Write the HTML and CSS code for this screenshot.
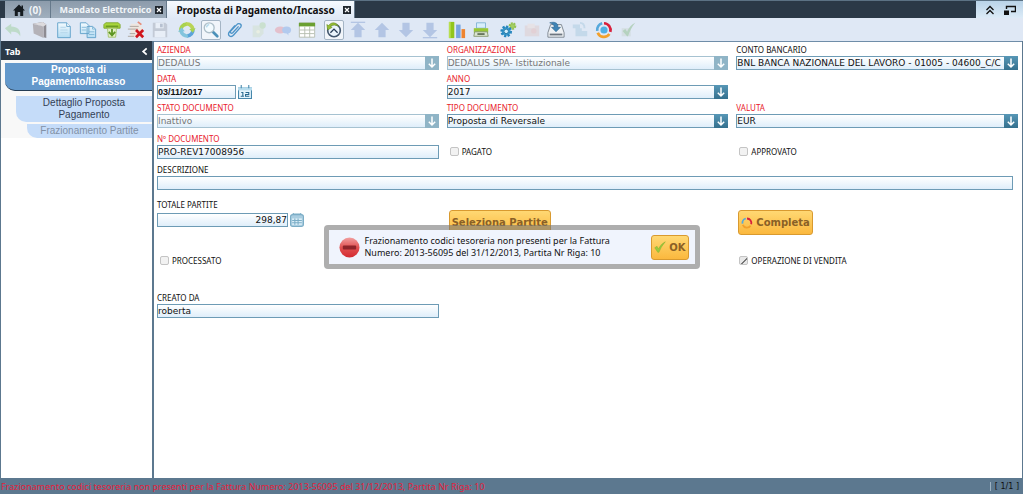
FILE: index.html
```html
<!DOCTYPE html>
<html lang="it">
<head>
<meta charset="utf-8">
<title>Proposta di Pagamento/Incasso</title>
<link rel="stylesheet" href="styles.css">
</head>
<body>
<svg class="defs" aria-hidden="true">
  <defs>
    <linearGradient id="page" x1="0" y1="0" x2="0" y2="1"><stop offset="0" stop-color="#f4fbff"/><stop offset="1" stop-color="#b4dcf2"/></linearGradient>
    <linearGradient id="ball" x1="0" y1="0" x2="0" y2="1"><stop offset="0" stop-color="#f2a0a0"/><stop offset=".5" stop-color="#e05050"/><stop offset="1" stop-color="#d42a30"/></linearGradient>
    <symbol id="arrow" viewBox="0 0 14 14"><path d="M7 2.500v8.500M3.800 7.800 7 11l3.200-3.200" fill="none" stroke="#fff" stroke-width="1.500"/></symbol>
    <symbol id="up" viewBox="0 0 20 20"><path d="M10 2 18 10h-4v8H6v-8H2z" fill="#b3c5e4"/></symbol>
    <symbol id="ring" viewBox="0 0 20 20"><g fill="none" stroke-width="3"><path d="M10 2.500A7.500 7.500 0 0 1 17 12" stroke="#d8203c"/><path d="M16 14.500A7.500 7.500 0 0 1 3 13" stroke="#f2a12c"/><path d="M2.500 11A7.500 7.500 0 0 1 8 2.500" stroke="#56a9dc"/></g></symbol>
    <symbol id="tick" viewBox="0 0 16 16"><path d="M1 9l3-2 2 3.500Q9 4 15 1 9 8 6.500 15H5z" fill="#9cc93c" stroke="#7fae2c" stroke-width=".6"/></symbol>
  </defs>
</svg>

<header class="tabbar">
  <nav class="tabs">
    <div class="tab home"><button type="button"><svg viewBox="0 0 12 12"><path d="M6 .5 0 6.500h1.800V12h3V8h2.400v4h3V6.500H12L10 4.500V1.500H8.500V3z" fill="#151b20"/></svg>(0)</button></div>
    <div class="tab"><button type="button">Mandato Elettronico</button><button type="button" class="close" aria-label="Chiudi"><svg viewBox="0 0 8 8"><path d="M2 2l4 4M6 2 2 6" stroke="#fff" stroke-width="1.200"/></svg></button></div>
    <div class="tab active"><button type="button">Proposta di Pagamento/Incasso</button><button type="button" class="close" aria-label="Chiudi"><svg viewBox="0 0 8 8"><path d="M2 2l4 4M6 2 2 6" stroke="#fff" stroke-width="1.200"/></svg></button></div>
  </nav>
  <div class="window-tools">
    <button type="button" aria-label="Comprimi"><svg viewBox="0 0 10 10"><path d="M1.500 5 5 1.500 8.500 5M1.500 9 5 5.500 8.500 9" fill="none" stroke="#111" stroke-width="1.300"/></svg></button>
    <button type="button" aria-label="Finestra"><svg class="wide" viewBox="0 0 12 10"><path d="M2.500 4V1.500h9v5H7" fill="none" stroke="#111" stroke-width="1.400"/><path d="M0 5.500h5V10H0z" fill="#111"/></svg></button>
  </div>
</header>

<div class="toolbar" role="toolbar">
  <button type="button" class="off" aria-label="Annulla"><svg viewBox="0 0 20 20"><path d="M1 8 8 3v3c7 0 11 4 10 11-2-4-5-5.500-10-5v3z" fill="#9fd09f"/></svg></button>
  <button type="button" class="sep" aria-label="Aiuto"><svg viewBox="0 0 20 20"><path d="M2 3 13 1l4 3v15l-3-1V6z" fill="#8d8b92"/><path d="M2 3l12 3v13L3 14z" fill="#b4b2b8"/><path d="M2 3 13 1l4 3-3 2z" fill="#dddbde"/></svg></button>
  <button type="button" aria-label="Nuovo"><svg viewBox="0 0 20 20"><path d="M3 2h10l4 4v12.500H3z" fill="url(#page)" stroke="#5d9fc8"/><path d="M13 2v4h4" fill="#fff" stroke="#5d9fc8"/><path d="M6 7h6M6 10h8M6 13h8" stroke="#b3d5ea"/></svg></button>
  <button type="button" aria-label="Copia"><svg viewBox="0 0 20 20"><path d="M1.500 2H8l3 3v9H1.500zM9 6h6l3.500 3v9.500H9z" fill="url(#page)" stroke="#5d9fc8"/><path d="M15 6v3h3.500M3 7h5M3 10h5M11 12h6M11 15h6" fill="none" stroke="#82b8d8"/></svg></button>
  <button type="button" aria-label="Elimina"><svg viewBox="0 0 20 20"><path d="M3 2h14l2 2v4H1V4z" fill="#a9d63c" stroke="#7ea72d"/><path d="M3 5h14v2H3z" fill="#6d9c22"/><path d="M5 8h10l-1 10H6z" fill="#e3f0c5" stroke="#a3c26a"/><path d="M10 9v6M6.500 12l3.500 4 3.500-4" fill="none" stroke="#5d9623" stroke-width="2"/></svg></button>
  <button type="button" aria-label="Elimina selezione"><svg viewBox="0 0 20 20"><path d="M4 3h9l4 4v11H4z" fill="#efe6df"/><path d="M3 6h10M1 9h11M3 14h6M1 17h7" stroke="#aaa39b"/><path d="m12 1 4 3" stroke="#e68d79" stroke-width="2"/><path d="m10 10 8 8M18 10l-8 8" stroke="#cf151d" stroke-width="3"/></svg></button>
  <button type="button" class="off" aria-label="Salva"><svg viewBox="0 0 20 20"><path d="M2 2h14l2 2v14H2z" fill="#a9aeb9"/><path d="M5 2h9v6H5zM4 11h12v7H4z" fill="#f1f4f9"/><path d="M10 3h3v4h-3z" fill="#909cae"/></svg></button>
  <button type="button" class="sep" aria-label="Aggiorna"><svg viewBox="0 0 20 20"><g fill="none" stroke-width="4"><path d="M3.500 12A6.500 6.500 0 0 1 10 3.500" stroke="#a9d34e"/><path d="M9 3.500A6.500 6.500 0 0 1 16.500 9" stroke="#b9d455"/><path d="M16.500 9A6.500 6.500 0 0 1 10 16.500" stroke="#5ca4da"/><path d="M11 16.500A6.500 6.500 0 0 1 3.500 11" stroke="#83c4dd"/></g><path d="m12.500 9 4 4 3-5z" fill="#a9d34e"/><path d="m0 12 4-5 3.500 4.500z" fill="#83c4dd"/></svg></button>
  <button type="button" class="pressed" aria-label="Cerca"><svg viewBox="0 0 20 20"><path d="m12 12 5 5" stroke="#4c91b9" stroke-width="3" stroke-linecap="round"/><circle cx="8" cy="7.500" r="5.500" fill="#f3fbff" stroke="#aebfc9" stroke-width="1.500"/><path d="M5 7a3.500 3.500 0 0 1 3-3" fill="none" stroke="#b3d8eb" stroke-width="1.500"/></svg></button>
  <button type="button" aria-label="Allegato"><svg viewBox="0 0 20 20"><path d="m14 6-6.500 7c-1.500 1.500-3.500 0-2.500-1.700L12 4c2-2.300 6-.5 4.500 2.500L8.500 15.500c-3 3.500-7.500.5-5-3L10 5" fill="none" stroke="#4d94c8" stroke-width="1.500"/></svg></button>
  <button type="button" class="off" aria-label="Nota"><svg viewBox="0 0 20 20"><path d="M3 5h12v9l-4 4H3z" fill="#d3e2cd"/><circle cx="14" cy="5" r="3.500" fill="#b6d9aa"/><circle cx="9" cy="12" r="2" fill="#f3f5d0"/></svg></button>
  <button type="button" class="off" aria-label="Richiesta"><svg viewBox="0 0 20 20"><ellipse cx="7" cy="10" rx="6" ry="4" fill="#e99aa4"/><ellipse cx="14" cy="10" rx="5" ry="4" fill="#87aee8"/><path d="m13 12 3 4v-4z" fill="#87aee8"/></svg></button>
  <button type="button" aria-label="Griglia"><svg viewBox="0 0 20 20"><path d="M1.500 2h17v16h-17z" fill="#fff" stroke="#b4bcae"/><path d="M1 2h18v4H1z" fill="#6ba032"/><path d="M2 10h16M2 14h16M7.500 6v12M13 6v12" stroke="#b4bcae"/></svg></button>
  <button type="button" class="pressed sep" aria-label="Storico"><svg viewBox="0 0 20 20"><circle cx="10" cy="10.500" r="7" fill="#eaf4fc" stroke="#42566e" stroke-width="1.800"/><path d="m6 13 4-4 4 4" fill="none" stroke="#2a3f58" stroke-width="1.500"/><path d="M2 4l1 6 5-3-2-1c3-2 6-2 9 0-2-4-7-6-11-1z" fill="#97bd35" stroke="#658d20" stroke-width=".6"/></svg></button>
  <button type="button" aria-label="Primo"><svg viewBox="0 0 20 20"><use href="#up"/><path d="M2 1.500h16" stroke="#b3c5e4" stroke-width="1.500"/></svg></button>
  <button type="button" aria-label="Precedente"><svg viewBox="0 0 20 20"><use href="#up"/></svg></button>
  <button type="button" aria-label="Successivo"><svg viewBox="0 0 20 20"><use href="#up" transform="rotate(180 10 10)"/></svg></button>
  <button type="button" aria-label="Ultimo"><svg viewBox="0 0 20 20"><use href="#up" transform="rotate(180 10 10)"/><path d="M2 18.500h16" stroke="#b3c5e4" stroke-width="1.500"/></svg></button>
  <button type="button" class="sep" aria-label="Report"><svg viewBox="0 0 20 20"><path d="M1 1h6v18H1z" fill="#92c51c"/><path d="M9 4h5v15H9z" fill="#79a5df"/><path d="M15 9h4v10h-4z" fill="#ee8430"/><path d="M1 1h2v18H1z" fill="#b8df4f"/></svg></button>
  <button type="button" aria-label="Stampa"><svg viewBox="0 0 20 20"><path d="M5 2h10v6H5z" fill="#d8eefb" stroke="#7fb3d4"/><path d="M2 8h16v5H2z" fill="#99c735"/><path d="M3 12h14l1 5H2z" fill="#dbe4d2" stroke="#84976c"/><path d="M6 14.500h8" stroke="#3b4a31" stroke-width="1.500"/></svg></button>
  <button type="button" class="sep" aria-label="Processo"><svg viewBox="0 0 20 20"><circle cx="15" cy="5.500" r="3" fill="#a4ce66" stroke="#94c24f" stroke-width="2.500" stroke-dasharray="2 1"/><circle cx="8" cy="11.500" r="5" fill="#3f9fd0" stroke="#2585bd" stroke-width="3" stroke-dasharray="2.300 1.500"/><circle cx="8" cy="11.500" r="2.500" fill="#d4effc" stroke="#1b6f9f"/></svg></button>
  <button type="button" class="off" aria-label="Archivio"><svg viewBox="0 0 20 20"><path d="M2 5h16v12H2z" fill="#dfccca"/><path d="M5 3h8v5H5z" fill="#eeded9"/><circle cx="12" cy="11" r="3" fill="#e5bab6"/></svg></button>
  <button type="button" aria-label="Esporta"><svg viewBox="0 0 20 20"><path d="M4 4h12l3 9v5H1v-5z" fill="#eef1f4" stroke="#78818b"/><path d="M3 14h14v2H3z" fill="#6c7680"/><path d="M3 2c6-2 10 1 9 5h3l-5 5-5-5h3c0-3-2-4-5-5z" fill="#3f84b5" stroke="#285e88" stroke-width=".6"/></svg></button>
  <button type="button" class="off" aria-label="Flusso"><svg viewBox="0 0 20 20"><path d="M2 4h8v4H2zM5 8h7v9H5zM12 11h6v6h-6z" fill="#aacbe0"/><path d="M10 2c4 0 5 2 5 6" fill="none" stroke="#aacbe0" stroke-width="2"/></svg></button>
  <button type="button" aria-label="Prodotto"><svg viewBox="0 0 20 20"><use href="#ring"/><circle cx="10" cy="10" r="4" fill="#4fb0e5"/></svg></button>
  <button type="button" class="off" aria-label="Conferma"><svg viewBox="0 0 20 20"><path d="M3 8h10v9H3z" fill="#cbd6d2"/><path d="m4 11 3-2 2 3c2-5 5-8 9-10-4 5-6 9-8 15H9z" fill="#8cbd8a"/></svg></button>
</div>

<div class="workspace">
  <aside class="sidebar">
    <div class="side-head"><span>Tab</span><button type="button" aria-label="Chiudi pannello"><svg viewBox="0 0 8 10"><path d="M6.500 1.500 2.500 5l4 3.500" fill="none" stroke="#fff" stroke-width="2"/></svg></button></div>
    <nav class="side-nav">
      <a class="level1" href="#proposta">Proposta di Pagamento/Incasso</a>
      <a class="level2" href="#dettaglio">Dettaglio Proposta Pagamento</a>
      <a class="level3" href="#frazionamento">Frazionamento Partite</a>
    </nav>
  </aside>

  <main class="panel">
    <form class="form">
      <div class="field"><label class="required" for="azienda">AZIENDA</label><div class="combo disabled"><select id="azienda" disabled><option>DEDALUS</option></select><svg><use href="#arrow"/></svg></div></div>
      <div class="field"><label class="required" for="org">ORGANIZZAZIONE</label><div class="combo disabled"><select id="org" disabled><option>DEDALUS SPA- Istituzionale</option></select><svg><use href="#arrow"/></svg></div></div>
      <div class="field"><label for="conto">CONTO BANCARIO</label><div class="combo"><select id="conto"><option>BNL BANCA NAZIONALE DEL LAVORO - 01005 - 04600_C/C</option></select><svg><use href="#arrow"/></svg></div></div>

      <div class="field"><label class="required" for="data">DATA</label><div class="inline"><input class="date" id="data" value="03/11/2017"><button type="button" class="mini" aria-label="Calendario"><svg viewBox="0 0 13 13"><path d="M.5 2.500h12v10H.5z" fill="#e5f4fc" stroke="#4687ab"/><path d="M0 2h13v3H0z" fill="#b7dced"/><path d="M3 0v3M10 0v3" stroke="#4687ab"/><path d="M3 7h1.500v3.500M2.500 10.500h3M7 7h3v1.800H7v1.700h3.500" fill="none" stroke="#27688e"/></svg></button></div></div>
      <div class="field"><label class="required" for="anno">ANNO</label><div class="combo"><select id="anno"><option>2017</option></select><svg><use href="#arrow"/></svg></div></div>

      <div class="field first"><label class="required" for="stato">STATO DOCUMENTO</label><div class="combo disabled"><select id="stato" disabled><option>Inattivo</option></select><svg><use href="#arrow"/></svg></div></div>
      <div class="field"><label class="required" for="tipo">TIPO DOCUMENTO</label><div class="combo"><select id="tipo"><option>Proposta di Reversale</option></select><svg><use href="#arrow"/></svg></div></div>
      <div class="field"><label class="required" for="valuta">VALUTA</label><div class="combo"><select id="valuta"><option>EUR</option></select><svg><use href="#arrow"/></svg></div></div>

      <div class="field"><label class="required" for="numero">Nº DOCUMENTO</label><input id="numero" value="PRO-REV17008956"></div>
      <label class="check"><input type="checkbox" disabled>PAGATO</label>
      <label class="check"><input type="checkbox" disabled>APPROVATO</label>

      <div class="field full"><label for="descrizione">DESCRIZIONE</label><input id="descrizione"></div>

      <div class="field total"><label for="totale">TOTALE PARTITE</label><div class="inline"><input class="amount" id="totale" value="298,87"><button type="button" class="mini" aria-label="Calcolatrice"><svg viewBox="0 0 13 13"><rect x=".5" y="1.500" width="12" height="11" rx="2" fill="#a9cde0" stroke="#7badc6"/><path d="M2 5h9v6H2z" fill="#dceff8"/><path d="M3 1V0h7v1M2 7h9M2 9h9M4.500 5v6M7.500 5v6" fill="none" stroke="#7badc6"/></svg></button></div></div>
      <div class="action"><button type="button" class="gold">Seleziona Partite</button></div>
      <div class="action"><button type="button" class="gold"><svg viewBox="0 0 20 20"><use href="#ring"/></svg>Completa</button></div>

      <label class="check first"><input type="checkbox" disabled>PROCESSATO</label>
      <label class="check last"><input type="checkbox" checked disabled>OPERAZIONE DI VENDITA</label>

      <div class="field first"><label for="creato">CREATO DA</label><input id="creato" value="roberta"></div>
    </form>
  </main>
</div>

<footer class="statusbar"><span class="error">Frazionamento codici tesoreria non presenti per la Fattura Numero: 2013-56095 del 31/12/2013, Partita Nr Riga: 10</span><span class="count">[ 1/1 ]</span></footer>

<div class="overlay">
  <div class="dialog" role="alertdialog" aria-labelledby="message">
    <svg class="stop" viewBox="0 0 22 22"><circle cx="11" cy="11" r="10.500" fill="url(#ball)"/><rect x="4" y="9" width="14" height="4" rx="1" fill="#8e2429"/></svg>
    <p id="message">Frazionamento codici tesoreria non presenti per la Fattura Numero: 2013-56095 del 31/12/2013, Partita Nr Riga: 10</p>
    <button type="button" class="gold"><svg viewBox="0 0 16 16"><use href="#tick"/></svg>OK</button>
  </div>
</div>
</body>
</html>
```
FILE: styles.css
```css
* { box-sizing: border-box; }
body {
  margin: 0;
  height: 100vh;
  display: flex;
  flex-direction: column;
  overflow: hidden;
  background: #5c788f;
  color: #111;
  font-family: "DejaVu Sans", sans-serif;
  font-size: 9px;
}
.defs { position: absolute; width: 0; height: 0; }
button { border: 0; padding: 0; background: none; color: inherit; font: inherit; display: flex; align-items: center; }
svg { display: block; flex: none; }

.tabbar { display: flex; justify-content: space-between; height: 18px; background: #2b3947; border-top: 1px solid #5c7284; }
.tabs { display: flex; padding-left: 5px; }
.tab {
  display: flex; align-items: center; gap: 4px; padding: 0 3px 0 9px;
  background: linear-gradient(#8c9bab, #a0afbe); color: #f1f5f8; border-right: 1px solid #66798b;
  font-family: "Noto Sans", sans-serif; font-size: 9px; font-weight: bold;
}
.tab.home { padding: 0 8px; font-size: 10px; }
.home button { gap: 4px; }
.home svg { width: 12px; height: 12px; }
.tab.active { gap: 8px; background: linear-gradient(#f6fafe, #dfe9f6); color: #111; font-size: 10px; }
.close { width: 8px; height: 8px; background: #20272e; }
.close svg { width: 8px; height: 8px; }
.window-tools { display: flex; align-items: center; gap: 9px; padding: 0 7px 0 9px; background: linear-gradient(#b9d3e8, #dcebf7); }
.window-tools svg { width: 10px; height: 10px; }
.window-tools svg.wide { width: 12px; }

.toolbar { display: flex; align-items: center; height: 23px; background: #dfe8f5; border-left: 1px solid #6b8296; padding-top: 1px; }
.toolbar button { width: 24px; height: 20px; justify-content: center; }
.toolbar svg { width: 18px; height: 18px; }
.toolbar .sep { margin-left: 3px; }
.toolbar .off { opacity: .5; }
.toolbar .pressed svg { background: #f1f5fa; border: 1px solid #a5b5c5; border-radius: 2px; width: 20px; height: 20px; }

.workspace { flex: 1; min-height: 0; display: flex; gap: 2px; padding: 0 1px; }
.sidebar { width: 151px; background: #fff; border-top: 1px solid #2b3947; }
.side-head { display: flex; justify-content: space-between; align-items: center; height: 18px; padding: 0 4px; background: #2b3947; color: #fff; font-family: "Noto Sans", sans-serif; font-weight: bold; }
.side-head svg { width: 7px; height: 9px; }
.side-nav { display: flex; flex-direction: column; padding-top: 3px; background: #f8f8f8; font: 10px/12px "Liberation Sans", Arial, sans-serif; text-align: center; }
.side-nav a { text-decoration: none; border-bottom-left-radius: 10px; }
.level1 { margin-left: 4px; padding: 1px 5px 2px; background: #6398cb; color: #fff; font-weight: bold; border-bottom: 1px solid #243c54; }
.side-nav .level2 { margin: 5px 0 2px 15px; padding: 1px 16px; background: #c5dcf9; color: #333f55; }
.side-nav .level3 { margin-left: 26px; padding: 1px 4px; background: #c5dcf9; color: #8291a6; }

.panel { flex: 1; min-width: 0; background: #fff; border-top: 1px solid #6f8da8; }
.form {
  display: grid; grid-template-columns: repeat(3, minmax(0, 1fr)); column-gap: 8px;
  grid-template-rows: 29px 29px 31px 31px 31px 47px 50px 27px;
  padding: 2px 4px 0 3px;
}
.first { grid-column: 1; }
.last { grid-column: 3; }
.full { grid-column: 1 / -1; padding-right: 5px; }
.field > label { display: block; height: 12px; line-height: 12px; }
.field > label, .check { font-family: "Noto Sans", sans-serif; font-size: 8px; }
.required { color: #e8202c; }
input:not([type="checkbox"]), select {
  display: block; appearance: none; width: 100%; height: 14px; margin: 0; padding: 0; border: 1px solid #6d9bb5; border-radius: 0;
  background: linear-gradient(#fff, #dfeefa); color: #111; font: 9px/12px "DejaVu Sans", sans-serif; opacity: 1;
}
.combo { position: relative; }
.combo svg { position: absolute; top: 0; right: 0; width: 14px; height: 14px; background: linear-gradient(#5797b6, #34708e); pointer-events: none; }
.combo.disabled select { color: #777; border-color: #a6c2d1; }
.combo.disabled svg { background: #8fb4c6; }
.inline { display: flex; align-items: center; gap: 2px; }
.mini svg { width: 14px; height: 14px; }
.inline input.date { width: 79px; font-family: "Liberation Sans", Arial, sans-serif; font-weight: bold; }
.inline input.amount { width: 131px; text-align: right; }
.total { padding-top: 4px; }
.total > label { height: 14px; }
.check { display: flex; align-items: center; gap: 3px; padding-left: 3px; height: 36px; }
.check input { appearance: none; width: 9px; height: 9px; margin: 0; border: 1px solid #c4c4c4; border-radius: 2px; background: #f2f2f2; }
.check input:checked { background: linear-gradient(135deg, transparent 55%, #777 55% 70%, transparent 70%), #e8e8e8; }
.action { padding: 15px 0 0 2px; }
.gold {
  height: 25px; padding: 0 2px; gap: 3px; border: 1px solid #d99a2f; border-radius: 3px;
  background: linear-gradient(#ffd873, #fbb83e); color: #8a6026; font-size: 10px; font-weight: bold;
}
.gold svg { width: 12px; height: 12px; }

.statusbar { display: flex; justify-content: space-between; align-items: center; height: 16px; padding: 0 4px 0 1px; background: #5c788f; font-size: 8px; }
.error { color: #e3213c; font-family: "Noto Sans", sans-serif; font-size: 9px; }
.count { padding-left: 4px; border-left: 1px solid #9db1c2; }

.overlay { position: absolute; inset: 0; display: grid; place-items: center; pointer-events: none; }
.dialog {
  display: flex; align-items: center; width: 376px; min-height: 44px; padding: 0 6px 0 10px; pointer-events: auto;
  border: 5px solid rgba(120, 120, 120, .6); border-radius: 4px; background: #f0f4fd; background-clip: padding-box;
}
.dialog p { flex: 1; margin: 0 32px 0 5px; font: 9px/12px "Noto Sans", sans-serif; }
.stop { width: 21px; height: 21px; }
```
